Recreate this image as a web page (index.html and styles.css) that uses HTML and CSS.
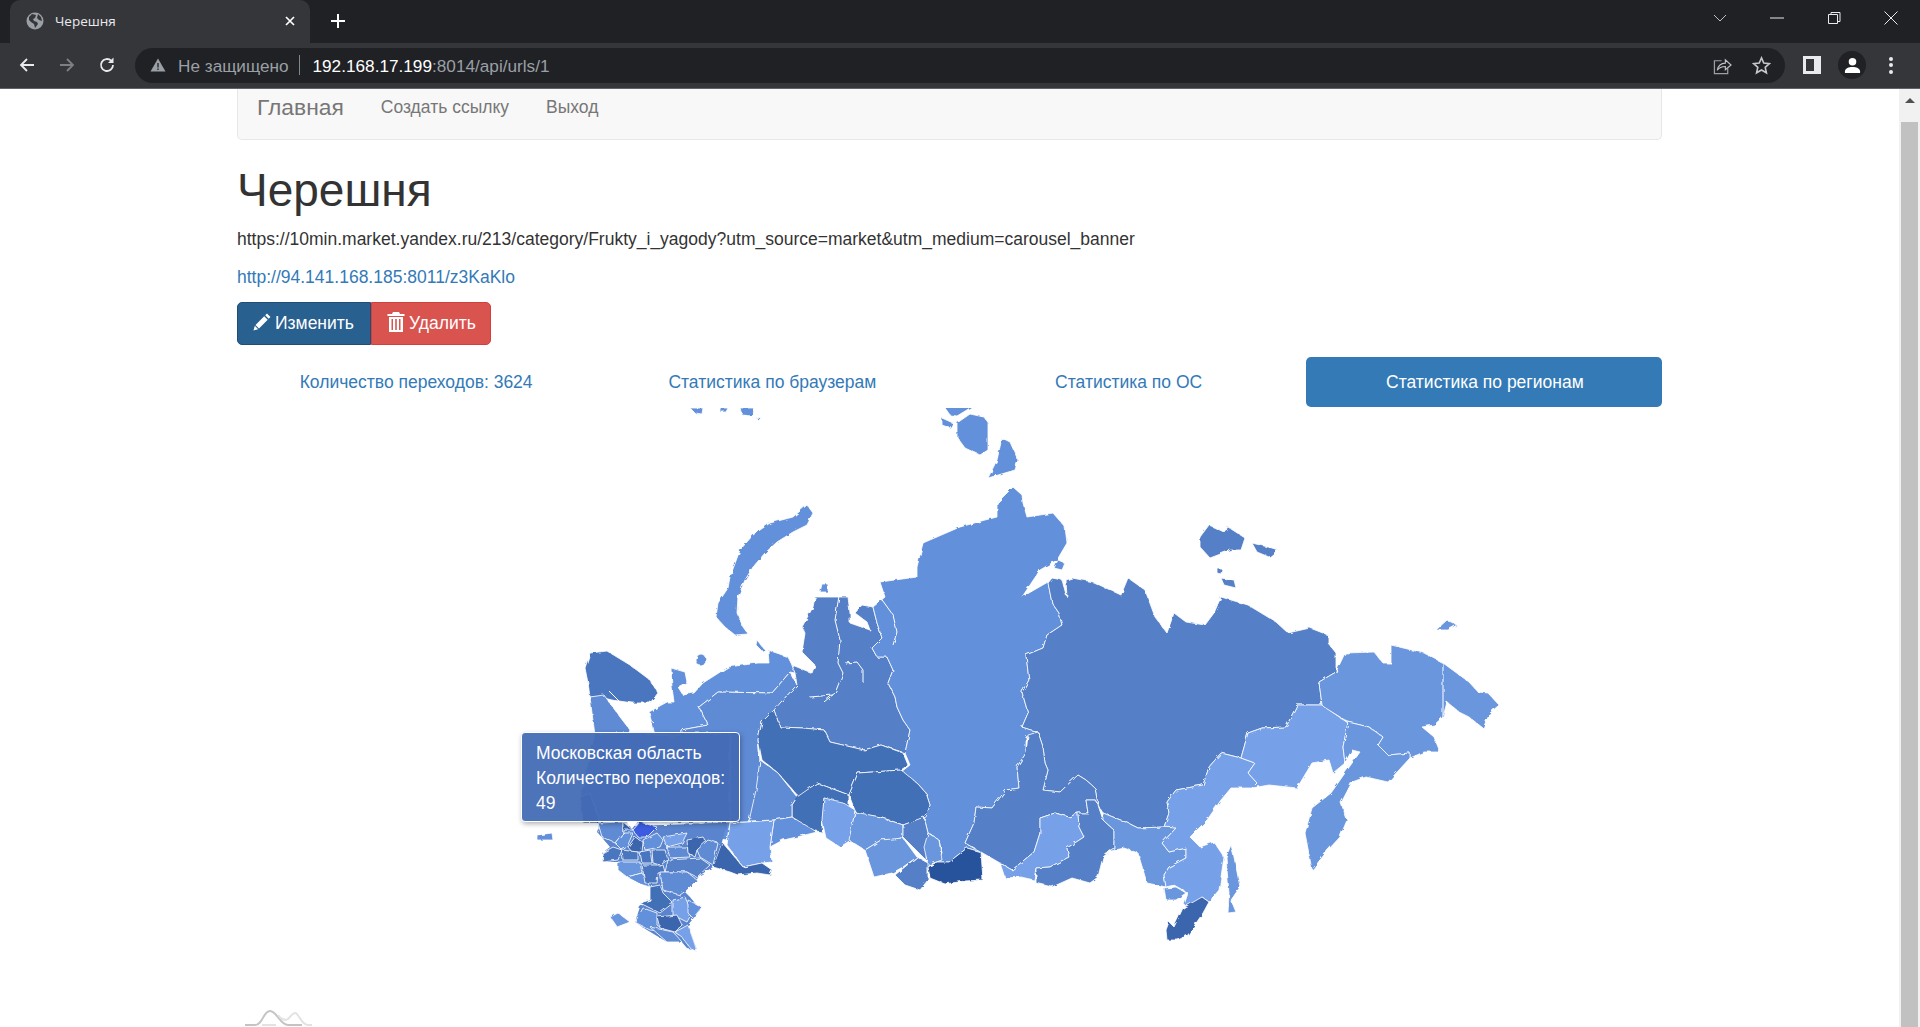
FILE: index.html
```html
<!DOCTYPE html>
<html>
  <head>
    <title>Черешня</title>
    <link rel="stylesheet" href="styles.css">
  </head>
  <body>
  <div class="tab-strip">
    <div class="tab">
      <svg class="favicon" viewBox="0 0 18 18"><circle cx="9" cy="9" r="8.5" fill="#9aa0a6"/><path d="M3 5l3-3 4 1-1 3-2 1 1 2 3 1 1 2-3 4-1-4-3-2-2-2zM12 2l3 3 1 4-3-1-2-2z" fill="#35363a"/></svg>
      <span class="tab-title">Черешня</span>
      <svg class="tab-close" viewBox="0 0 12 12"><path d="M2 2l8 8M10 2l-8 8" stroke="#fff" stroke-width="1.7"/></svg>
    </div>
    <svg class="new-tab" viewBox="0 0 16 16"><path d="M8 1v14M1 8h14" stroke="#fff" stroke-width="2"/></svg>
    <div class="window-controls">
      <svg viewBox="0 0 16 16"><path d="M2 5l6 6 6-6" fill="none" stroke="#bdc1c6" stroke-width="1"/></svg>
      <svg viewBox="0 0 16 16"><path d="M1 8h14" stroke="#e8eaed" stroke-width="1"/></svg>
      <svg viewBox="0 0 16 16"><path d="M2.500 4.500h9v9h-9zM5 4.500v-2h9v9h-2" fill="none" stroke="#e8eaed" stroke-width="1"/></svg>
      <svg viewBox="0 0 16 16"><path d="M1.500 1.500l13 13M14.500 1.500l-13 13" stroke="#e8eaed" stroke-width="1"/></svg>
    </div>
  </div>
  <div class="toolbar">
    <svg class="nav-icon" viewBox="0 0 18 18"><path d="M16 9H3M9 3L3 9l6 6" fill="none" stroke="#e8eaed" stroke-width="1.800"/></svg>
    <svg class="nav-icon" viewBox="0 0 18 18"><path d="M2 9h13M9 3l6 6-6 6" fill="none" stroke="#7c7f84" stroke-width="1.800"/></svg>
    <svg class="nav-icon" viewBox="0 0 18 18"><path d="M15 9a6 6 0 1 1-1.800-4.300" fill="none" stroke="#e8eaed" stroke-width="1.800"/><path d="M15.500 1.500v5.500h-5.500z" fill="#e8eaed"/></svg>
    <div class="omnibox">
      <svg class="warn-icon" viewBox="0 0 16 16"><path d="M8 1.500L15.500 14.500H.5z" fill="#9aa0a6"/><path d="M8 6v4.500M8 11.500v1.500" stroke="#202124" stroke-width="1.300"/></svg>
      <span class="not-secure">Не защищено</span>
      <span class="omni-sep"></span>
      <span class="url-host">192.168.17.199</span><span class="url-path">:8014/api/urls/1</span>
      <svg class="omni-icon share" viewBox="0 0 20 20"><path d="M9 5H1.500v13.500h14V13" fill="none" stroke="#9aa0a6" stroke-width="1.300"/><path d="M4.500 15c1-5 4-7.500 8.500-7.500V4l6 5.500-6 5V11c-4 0-6.500 1-8.500 4z" fill="#202124" stroke="#bdc1c6" stroke-width="1.200"/></svg>
      <svg class="omni-icon" viewBox="0 0 20 20"><path d="M10 2l2.400 5.400 5.900.6-4.400 3.900 1.300 5.800L10 14.700l-5.200 3 1.300-5.800L1.700 8l5.900-.6z" fill="none" stroke="#c4c7cb" stroke-width="1.700"/></svg>
    </div>
    <svg class="side-panel" viewBox="0 0 18 18"><path d="M0 0h18v18H0z" fill="#e8eaed"/><path d="M3 3h8v12H3z" fill="#35363a"/></svg>
    <div class="avatar">
      <svg viewBox="0 0 18 18"><circle cx="9" cy="5" r="4" fill="#fff"/><path d="M1 17v-2c0-3 4-4.500 8-4.500s8 1.500 8 4.500v2z" fill="#fff"/></svg>
    </div>
    <div class="menu-dots"><i></i><i></i><i></i></div>
  </div>
  <div class="viewport">
    <div class="content">
      <div class="navbar">
        <a class="brand">Главная</a>
        <a class="nav-link">Создать ссылку</a>
        <a class="nav-link">Выход</a>
      </div>
      <h1>Черешня</h1>
      <p class="long-url">https://10min.market.yandex.ru/213/category/Frukty_i_yagody?utm_source=market&amp;utm_medium=carousel_banner</p>
      <p class="short-url"><a>http://94.141.168.185:8011/z3KaKlo</a></p>
      <div class="btn-group">
        <a class="btn btn-edit">
          <svg class="btn-icon" viewBox="0 0 18 18"><path d="M14 0.500l3.500 3.500-1.800 1.800-3.500-3.500zM11.200 3.300l3.500 3.500-8.700 8.700-3.500-3.500zM1.800 12.800l3.400 3.400-4.700 1.300z" fill="#fff"/></svg>
          Изменить
        </a>
        <a class="btn btn-delete">
          <svg class="btn-icon" viewBox="0 0 18 20"><path d="M6 0h6l1 2h4.500v2H.5V2H5zM2 5h14v15H2zM4.500 7v11h1.500V7zM8.200 7v11h1.600V7zM12 7v11h1.500V7z" fill="#fff" fill-rule="evenodd"/></svg>
          Удалить
        </a>
      </div>
      <ul class="stat-tabs">
        <li><a>Количество переходов: 3624</a></li>
        <li><a>Статистика по браузерам</a></li>
        <li><a>Статистика по ОС</a></li>
        <li class="active"><a>Статистика по регионам</a></li>
      </ul>
      <div class="map-box">
        <svg class="map" viewBox="237 408 1425 619" width="1425" height="619">
          <defs>
            <filter id="rough" x="0" y="0" width="100%" height="100%">
              <feTurbulence type="fractalNoise" baseFrequency="0.16" numOctaves="2" seed="4"/>
              <feDisplacementMap in="SourceGraphic" scale="3.500"/>
            </filter>
          </defs>
          <g class="regions" filter="url(#rough)">
            <!-- arctic islands -->
            <path class="c3" d="M807 505L813 513 807 525 793 532 777 542 765 553 753 567 745 580 738 597 737 613 743 627 748 634 735 635 725 627 716 617 718 603 728 588 730 577 740 550 753 535 770 523 793 517z"/>
            <path class="c3" d="M690 408L703 408 702 414 695 413zM720 408H728L726 412 720 412zM740 408H755L752 416 742 415zM756 417L761 418 758 421z"/>
            <path class="c3" d="M943 405H975L957 416 950 415zM942 418L953 423 950 428 942 425zM957 423L970 414 984 417 988 423 988 450 980 455 965 448 957 437zM1002 438L1010 442 1018 460 1015 470 988 478 997 460z"/>
            <path class="c3" d="M820 592L822 584 828 584 828 592zM757 640L765 650 762 651 756 645z"/>
            <ellipse class="c3" cx="701" cy="660" rx="5" ry="6"/>
            <path class="c5" d="M1200 537L1209 525 1224 532 1228 527 1245 538 1241 550 1231 550 1210 558 1200 547zM1252 543L1272 548 1278 550 1269 557 1257 552zM1221 578L1234 580 1236 588 1224 585zM1217 568H1222L1221 574 1217 573z"/>
            <path class="c2" d="M1436 630L1447 620 1457 625 1448 630z"/>
            <path class="c3" d="M1058 560L1065 563 1062 570 1054 568z"/>
            <!-- north west -->
            <path class="c6" d="M585 668L590 653 607 651 630 665 650 680 658 693 650 703 633 703 612 700 600 697 590 697 588 683z"/>
            <path class="c4" d="M590 697L604 695 612 706 620 717 630 730 628 735 595 735 592 713z"/>
            <path class="c4" d="M595 733H732L748 822 583 823 580 797z"/>
            <path class="c7" d="M580 797L590 793 600 823 583 823z"/>
            <path class="c3" d="M649 712L667 702 674 702 672 687 671 668 685 672 687 682 678 687 683 695 694 693 703 683 728 667 758 663 769 663 768 650 788 657 792 665 795 673 790 672 772 693 718 692 699 707 708 725 681 730 681 735 655 735z"/>
            <path class="c4" d="M718 692L772 693 790 672 797 685 781 702 776 710 762 722 758 740 760 762 758 780 757 803 748 822 730 822 730 733 681 733 681 730 708 725 699 707z"/>
            <!-- urals and west siberia -->
            <path class="c5" d="M792 665L812 673 815 665 802 652 805 633 802 627 813 607 815 597 833 597 848 597 850 613 850 623 870 630 867 622 855 613 862 605 873 607 877 623 882 638 872 648 877 657 887 657 893 670 888 683 895 697 897 707 903 720 910 730 905 753 881 745 864 750 830 742 824 730 803 728 780 727 774 710 781 702 797 685 795 673z"/>
            <path class="c3" d="M1013 487L1022 495 1023 503 1027 517 1053 513 1065 527 1067 543 1057 560 1040 570 1022 597 1048 582 1052 603 1059 613 1062 625 1047 635 1043 648 1026 655 1029 680 1022 692 1028 713 1022 727 1038 732 1026 737 1026 753 1017 767 1019 788 1006 790 992 808 976 807 974 823 965 843 981 852 967 848 949 862 937 862 942 853 939 840 928 833 924 817 930 805 926 793 917 783 901 772 910 765 905 753 910 730 903 720 897 707 895 697 888 683 893 670 887 657 877 657 872 648 882 638 877 623 873 607 885 597 880 582 917 577 917 567 923 543 960 527 985 520 997 517 997 503z"/>
            <path class="c6b" d="M762 722L774 710 780 727 803 728 824 730 830 742 864 750 881 745 903 753 908 765 901 770 858 773 849 795 817 783 799 797 778 773 762 760 758 740z"/>
            <path class="c6b" d="M858 773L901 770 917 783 926 793 930 805 926 817 903 825 880 817 856 813 849 795z"/>
            <path class="c6b" d="M797 797L817 783 849 795 849 810 824 798 822 832 810 830 792 817 792 805z"/>
            <path class="c1" d="M824 798L842 802 855 810 851 833 851 840 840 847 826 838 822 820z"/>
            <path class="c2" d="M855 812L880 817 903 825 903 837 895 840 881 840 865 850 849 840 851 830z"/>
            <path class="c2" d="M865 850L881 840 903 838 917 857 903 867 892 873 874 877z"/>
            <path class="c5" d="M903 825L924 817 928 833 926 860 913 847 903 837z"/>
            <path class="c2" d="M928 833L939 840 942 860 928 865 924 847z"/>
            <path class="c5" d="M917 857L928 863 928 880 920 890 905 885 895 875z"/>
            <path class="c8" d="M928 867L937 862 949 862 967 848 981 852 983 880 965 881 945 884 930 878z"/>
            <path class="c4" d="M760 760L778 773 797 797 792 805 792 817 774 820 749 821 756 790z"/>
            <path class="c3" d="M774 820L792 817 817 832 797 837 783 840 770 847z"/>
            <path class="c1" d="M730 823L748 822 774 820 770 847 772 862 762 863 743 867 727 845z"/>
            <path class="c7" d="M722 842L743 867 762 863 772 870 770 875 757 873 738 875 730 872 713 867z"/>
            <path class="c3" d="M685 823L700 823 695 837 685 837zM703 823L730 822 727 840 707 837z"/>
            <!-- far east -->
            <path class="c5" d="M1048 583L1052 603 1059 613 1062 625 1047 635 1043 648 1026 655 1029 680 1022 692 1028 713 1022 727 1038 732 1043 747 1045 763 1048 770 1043 790 1060 792 1078 775 1086 780 1095 788 1098 805 1103 813 1128 823 1138 828 1164 827 1169 813 1167 802 1176 790 1203 785 1209 767 1221 753 1241 758 1248 733 1262 728 1286 727 1297 705 1322 705 1319 682 1336 672 1336 653 1328 643 1328 635 1310 628 1288 633 1276 622 1248 605 1221 597 1214 613 1205 625 1186 622 1174 613 1167 633 1155 617 1145 590 1128 578 1121 595 1093 582 1072 578 1066 580 1067 598 1062 580 1052 578z"/>
            <path class="c5" d="M1028 735L1038 732 1043 747 1045 763 1048 770 1043 790 1060 792 1078 775 1086 780 1095 788 1098 805 1095 800 1086 800 1088 813 1078 813 1069 817 1055 813 1040 818 1040 833 1034 852 1012 870 1000 863 981 852 965 843 974 823 976 807 992 808 1006 790 1019 788 1017 767 1026 753z"/>
            <path class="c1" d="M1040 818L1055 813 1069 817 1078 813 1079 827 1084 837 1067 848 1069 857 1050 867 1036 868 1034 880 1021 877 1005 878 1000 863 1012 870 1034 852 1040 833z"/>
            <path class="c5" d="M1086 800L1095 800 1098 805 1103 820 1114 830 1114 848 1103 857 1098 877 1090 883 1072 878 1052 887 1036 883 1036 868 1050 867 1069 857 1067 848 1084 837 1079 827 1078 813 1088 813z"/>
            <path class="c2" d="M1103 813L1128 823 1138 828 1164 827 1176 828 1162 843 1169 852 1186 848 1186 858 1169 867 1164 875 1166 887 1147 883 1138 853 1124 848 1107 852 1114 848 1114 830 1103 820z"/>
            <path class="c1" d="M1221 753L1241 758 1255 763 1248 773 1257 783 1252 788 1231 788 1221 800 1207 820 1190 837 1200 847 1214 842 1224 857 1219 890 1209 902 1202 897 1195 908 1184 905 1188 893 1174 885 1166 887 1164 875 1169 867 1186 858 1186 848 1169 852 1162 843 1176 828 1164 827 1169 813 1167 802 1176 790 1203 785 1209 767z"/>
            <path class="c1" d="M1248 733L1262 728 1286 727 1297 705 1322 705 1348 723 1343 747 1345 763 1333 773 1329 760 1312 763 1297 788 1269 785 1252 788 1257 783 1248 773 1255 763 1241 758z"/>
            <path class="c2" d="M1164 888L1176 887 1186 893 1176 900 1166 900z"/>
            <path class="c7" d="M1209 902L1202 897 1183 908 1174 927 1169 922 1166 930 1167 940 1178 940 1188 935 1203 913z"/>
            <path class="c2" d="M1231 845L1234 857 1240 887 1231 900 1236 912 1228 913 1229 893 1226 857z"/>
            <path class="c2" d="M1336 672L1345 653 1374 652 1383 663 1391 663 1391 645 1424 653 1443 663 1469 682 1478 692 1488 693 1499 705 1490 713 1483 728 1469 717 1459 712 1447 702 1443 717 1434 725 1422 727 1434 737 1440 752 1424 752 1410 758 1410 753 1388 755 1378 745 1383 737 1369 727 1348 722 1324 707 1322 705 1319 682z"/>
            <path class="c2" d="M1348 722L1369 727 1383 737 1378 745 1388 755 1410 753 1410 758 1388 782 1366 777 1352 782 1341 803 1347 820 1340 837 1328 850 1312 870 1305 833 1312 808 1331 793 1345 773 1360 752 1352 750 1345 763 1343 747z"/>
            <!-- european south -->
            <path class="south" d="M600 827L598 833 610 847 602 853 603 862 618 862 627 877 643 883 650 887 650 900 640 907 635 922 647 930 667 942 682 942 687 948 697 950 688 925 700 910 690 897 685 892 697 877 713 867 722 842 727 823z"/>
            <path class="c3" d="M537 835L552 833 553 840 537 840z"/>
            <path class="c4" d="M598 823L623 822 623 833 615 843 602 837z"/>
            <path class="c6" d="M613 847L602 853 603 862 618 860 622 850z"/>
            <path class="c3" d="M615 843L623 833 633 833 627 847 622 850z"/>
            <path class="c7" d="M628 847L635 837 643 842 642 852 632 852z"/>
            <path class="c3" d="M643 840L657 833 663 840 660 847 645 850z"/>
            <path class="c1" d="M663 837L687 833 682 843 667 847z"/>
            <path class="c4" d="M667 847L687 847 690 857 670 858z"/>
            <path class="c7" d="M687 840L703 837 707 843 697 850 695 857 688 853z"/>
            <path class="c4" d="M697 850L708 840 718 843 713 865 700 857z"/>
            <path class="c6" d="M622 850L638 852 638 860 623 860z"/>
            <path class="c6" d="M640 852L650 850 652 863 642 863z"/>
            <path class="c6" d="M652 850L665 850 668 860 660 865 653 863z"/>
            <path class="c5" d="M668 860L700 858 710 865 697 877 687 872 665 872z"/>
            <path class="c2" d="M618 862L640 862 642 873 627 877 618 870z"/>
            <path class="c3" d="M627 877L642 873 650 887 640 884z"/>
            <path class="c6" d="M642 865L663 865 665 872 658 873 657 883 645 883z"/>
            <path class="c4" d="M660 872L687 872 697 880 687 890 680 895 663 890z"/>
            <path class="c6b" d="M650 887L660 885 663 893 673 903 660 913 640 903 650 900z"/>
            <path class="c1" d="M673 900L685 897 692 913 687 922 673 915z"/>
            <path class="c3" d="M688 900L702 907 693 918 688 913z"/>
            <path class="c2" d="M610 917L618 913 630 922 617 927z"/>
            <path class="c3" d="M635 922L643 908 657 913 657 925 667 932 650 930z"/>
            <path class="c7" d="M657 917L677 915 682 925 675 932 660 928z"/>
            <path class="c1" d="M675 932L688 925 695 945 697 952 690 948 682 937z"/>
            <path class="c4" d="M650 927L673 932 682 942 667 942z"/>
            <path class="c7" d="M623 822L633 830 625 830 623 833z"/>
            <path class="moscow" d="M633 830L640 822 657 827 647 837 638 837z"/>
            <!-- water and inner lines -->
            <path class="water" d="M840 590L835 620 840 640 838 663 843 673 835 693 824 702" stroke-width="7"/>
            <path class="water" d="M845 663L857 662 863 670 863 683" stroke-width="3"/>
            <path class="water" d="M810 697L833 695" stroke-width="3"/>
            <path class="water" d="M880 597L893 615 897 632 893 645" stroke-width="4"/>
            <path class="water" d="M610 692L622 704 640 712 655 724" stroke-width="7"/>
            <path class="water" d="M1443 663V717" stroke-width="1.200"/>
          </g>
          <path class="logo-dark" d="M245 1025h10c8 0 8-14 15-14 7 0 10 14 18 14h14"/>
          <path class="logo-light" d="M262 1025H276M278 1015c4 5 7 6 10 4 3-3 5-6 7-6 4 0 6 12 13 12h4"/>
        </svg>
        <div class="map-tooltip">
          Московская область<br>
          Количество переходов:<br>
          49
        </div>
      </div>
    </div>
    <div class="scrollbar">
      <span class="scroll-up"></span>
      <span class="scroll-thumb"></span>
    </div>
  </div>
</body>
</html>
```

FILE: styles.css
```css
* {
  box-sizing: border-box;
}

html, body {
  height: 100%;
}

body {
  margin: 0;
  overflow: hidden;
  display: flex;
  flex-direction: column;
  font-family: "Liberation Sans", Arial, sans-serif;
  font-size: 17.5px;
  color: #333;
  background-color: #fff;
}

/* browser chrome */
.tab-strip {
  height: 43px;
  flex: none;
  display: flex;
  align-items: center;
  padding-left: 10px;
  background-color: #202124;
}

.tab {
  width: 300px;
  height: 43px;
  display: flex;
  align-items: center;
  padding: 0 16px 2px;
  background-color: #35363a;
  border-radius: 10px 10px 0 0;
}

.favicon {
  width: 18px;
  height: 18px;
  flex: none;
}

.tab-title {
  flex: 1;
  margin-left: 11px;
  font-family: "Open Sans", sans-serif;
  font-size: 13.5px;
  color: #e8eaed;
}

.tab-close {
  width: 12px;
  height: 12px;
  margin-right: -2px;
}

.new-tab {
  width: 16px;
  height: 16px;
  margin: 0 0 2px 20px;
}

.window-controls {
  margin: 0 21px 8px auto;
  display: flex;
  gap: 41px;
}

.window-controls svg {
  width: 16px;
  height: 16px;
}

.toolbar {
  height: 46px;
  flex: none;
  display: flex;
  align-items: center;
  padding: 0 19px 1px 18px;
  background-color: #35363a;
  border-bottom: 1px solid #5f6368;
}

.nav-icon {
  width: 18px;
  height: 18px;
  margin-right: 22px;
}

.omnibox {
  width: 1650px;
  height: 35px;
  margin-left: -3px;
  display: flex;
  align-items: center;
  padding: 0 14px 0 15px;
  background-color: #202124;
  border-radius: 18px;
  font-size: 17.200px;
}

.warn-icon {
  width: 16px;
  height: 16px;
}

.not-secure {
  margin: 2px 0 0 12px;
  color: #9aa0a6;
}

.omni-sep {
  width: 1px;
  height: 20px;
  margin: 0 13px 0 10px;
  background-color: #80868b;
}

.url-host {
  margin-top: 2px;
  color: #fff;
}

.url-path {
  margin-top: 2px;
  color: #9aa0a6;
}

.omni-icon {
  width: 19px;
  height: 19px;
  margin-left: 20px;
}

.omni-icon.share {
  margin-left: auto;
}

.side-panel {
  width: 18px;
  height: 18px;
  margin-left: 18px;
}

.avatar {
  width: 28px;
  height: 28px;
  margin-left: 17px;
  display: flex;
  align-items: center;
  justify-content: center;
  background-color: #202124;
  border-radius: 50%;
}

.avatar svg {
  width: 17px;
  height: 17px;
}

.menu-dots {
  margin-left: 23px;
  display: flex;
  flex-direction: column;
  gap: 2.500px;
}

.menu-dots i {
  width: 4px;
  height: 4px;
  background-color: #e8eaed;
  border-radius: 50%;
}

/* page */
.viewport {
  flex: 1;
  min-height: 0;
  display: flex;
}

.content {
  flex: 1;
  padding-left: 237px;
  overflow: hidden;
}

.content > * {
  width: 1425px;
}

.navbar {
  height: 51px;
  display: flex;
  align-items: flex-start;
  padding: 3px 19px 0;
  background-color: #f8f8f8;
  border: 1px solid #e7e7e7;
  border-top: 0;
  border-radius: 0 0 5px 5px;
  color: #777;
}

.brand {
  font-size: 22.800px;
  line-height: 31px;
  margin-right: 37px;
}

.nav-link {
  font-size: 17.500px;
  line-height: 30px;
  margin-right: 37px;
}

h1 {
  margin: 24px 0 0;
  font-size: 46px;
  font-weight: 500;
  line-height: 52px;
}

.long-url {
  margin: 10px 0 0;
  line-height: 26px;
}

.short-url {
  margin: 12px 0 0;
  line-height: 26px;
  color: #337ab7;
}

.btn-group {
  margin-top: 12px;
  display: flex;
}

.btn {
  height: 43px;
  display: flex;
  align-items: center;
  gap: 4px;
  color: #fff;
  border: 1px solid transparent;
}

.btn-edit {
  width: 134px;
  padding-left: 15px;
  background-color: #286090;
  border-color: #204d74;
  border-radius: 5px 0 0 5px;
}

.btn-delete {
  width: 120px;
  padding-left: 15px;
  background-color: #d9534f;
  border-color: #d43f3a;
  border-radius: 0 5px 5px 0;
}

.btn-icon {
  width: 18px;
  height: 20px;
  margin-top: -3px;
}

.stat-tabs {
  height: 50px;
  margin: 12px 0 0;
  padding: 0;
  list-style-type: none;
  display: grid;
  grid-template-columns: repeat(4, 1fr);
  gap: 0;
}

.stat-tabs li {
  display: flex;
  align-items: center;
  justify-content: center;
  padding-left: 2px;
  color: #337ab7;
  border-radius: 5px;
}

.stat-tabs li.active {
  color: #fff;
  background-color: #337ab7;
}

/* map */
.map-box {
  position: relative;
  height: 620px;
  margin-top: 1px;
}

.map {
  display: block;
}

.regions path, .regions ellipse {
  stroke: #fff;
  stroke-width: 1;
  stroke-opacity: 0.8;
}

.c1 { fill: #76a0e8; }
.c2 { fill: #6a96de; }
.c3 { fill: #6490da; }
.c4 { fill: #5f8ad4; }
.c5 { fill: #5580c8; }
.c6 { fill: #4a76bf; }
.c6b { fill: #436fb7; }
.c7 { fill: #3a65ad; }
.c8 { fill: #27529c; }
.moscow { fill: #3a5be0; }

.regions .south {
  fill: #5a84cd;
  stroke: none;
}

.regions .water {
  fill: none;
  stroke: #fff;
  stroke-opacity: 1;
}

.logo-dark, .logo-light {
  fill: none;
  stroke-width: 2;
}

.logo-dark { stroke: #c4c4c4; }
.logo-light { stroke: #e2e2e2; }

.map-tooltip {
  position: absolute;
  left: 284px;
  top: 324px;
  width: 219px;
  height: 90px;
  padding: 8px 0 0 14px;
  font-size: 17.500px;
  line-height: 25px;
  white-space: nowrap;
  color: #fff;
  background-color: rgba(67, 107, 181, 0.95);
  border: 1px solid #fff;
  border-radius: 4px;
  box-shadow: 1px 2px 5px rgba(0, 0, 0, 0.3);
}

.map-tooltip::after {
  content: "";
  position: absolute;
  left: 104px;
  bottom: -8px;
  border-left: 6px solid transparent;
  border-right: 6px solid transparent;
  border-top: 8px solid #fff;
}

.scrollbar {
  width: 21px;
  flex: none;
  display: flex;
  flex-direction: column;
  align-items: center;
  background-color: #f1f1f1;
}

.scroll-up {
  margin-top: 9px;
  border-left: 5px solid transparent;
  border-right: 5px solid transparent;
  border-bottom: 5px solid #505050;
}

.scroll-thumb {
  flex: 1;
  width: 17px;
  margin-top: 19px;
  background-color: #c1c1c1;
}
```
